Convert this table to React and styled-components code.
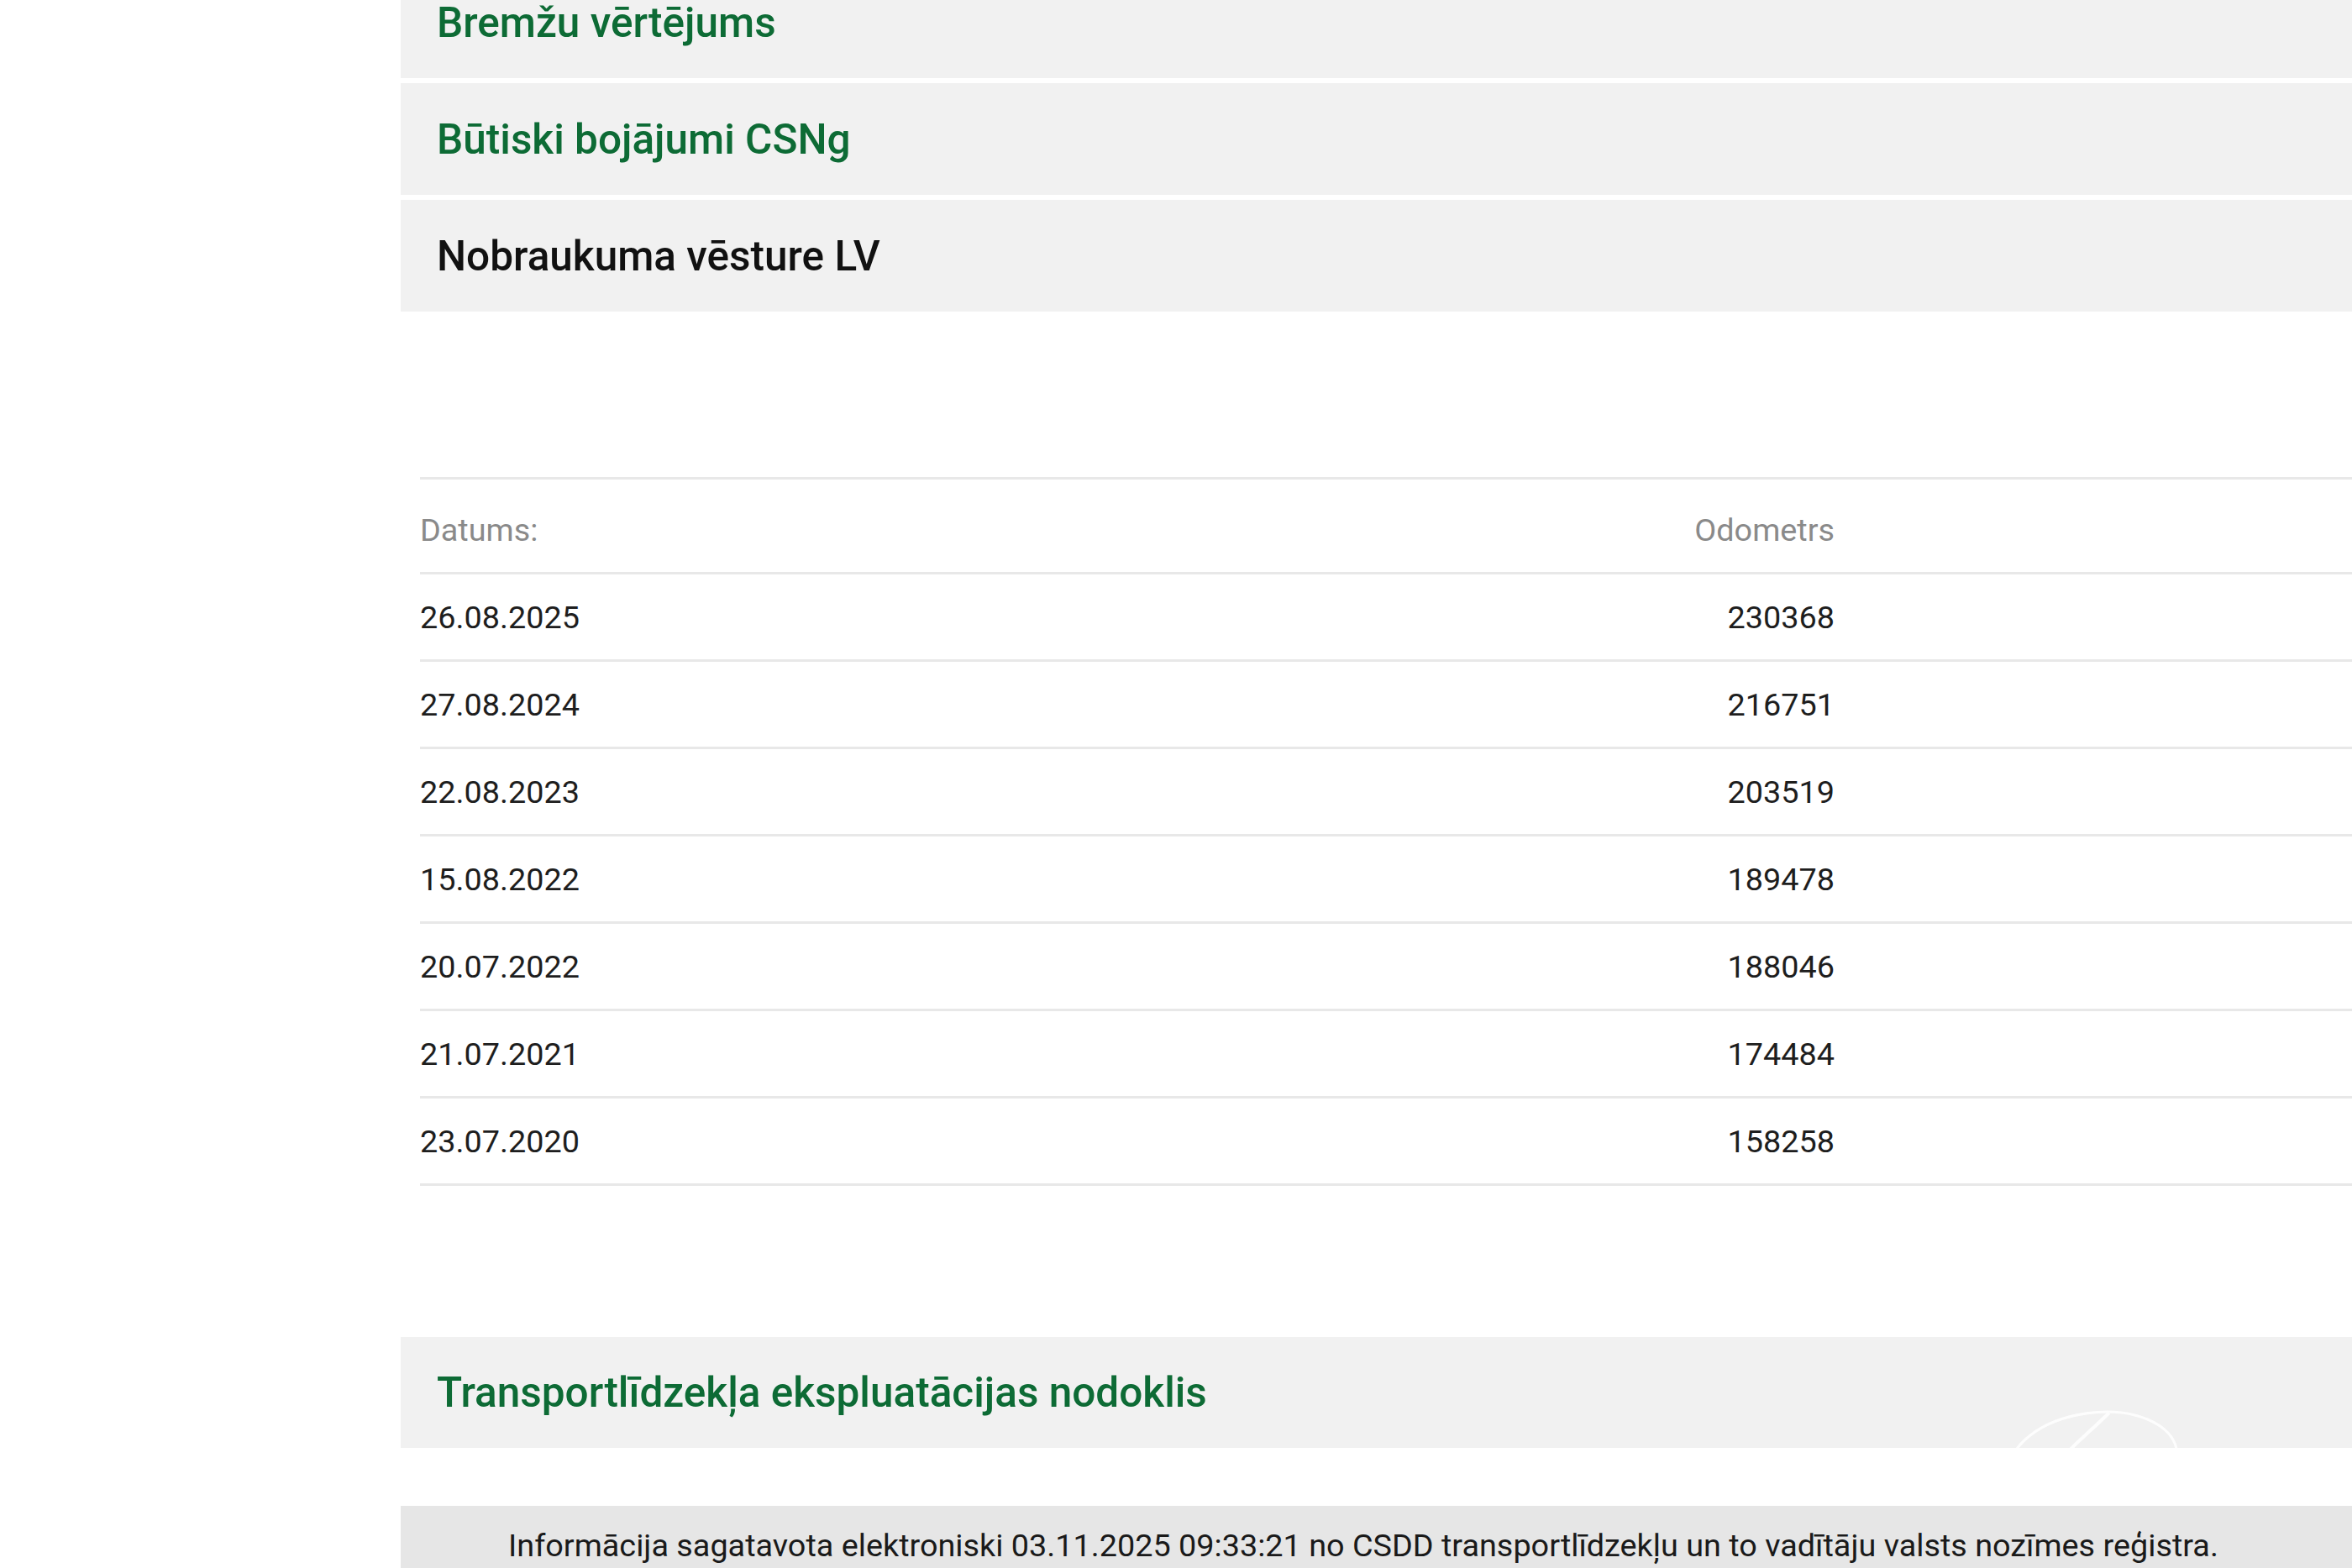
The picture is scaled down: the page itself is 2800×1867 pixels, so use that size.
import React from "react";
import styled, { createGlobalStyle } from "styled-components";

const mileage = [
  { date: "26.08.2025", km: "230368" },
  { date: "27.08.2024", km: "216751" },
  { date: "22.08.2023", km: "203519" },
  { date: "15.08.2022", km: "189478" },
  { date: "20.07.2022", km: "188046" },
  { date: "21.07.2021", km: "174484" },
  { date: "23.07.2020", km: "158258" },
];

const App = () => {
  return (
    <>
      <GlobalStyle />
      <Page>
        <Content>
          <SectionBar>
            <SectionTitle>Bremžu vērtējums</SectionTitle>
          </SectionBar>
          <SectionBar>
            <SectionTitle>Būtiski bojājumi CSNg</SectionTitle>
          </SectionBar>
          <SectionBar>
            <SectionTitle active>Nobraukuma vēsture LV</SectionTitle>
          </SectionBar>

          <MileageTable>
            <HeadRow>
              <HeadCell>Datums:</HeadCell>
              <HeadCell right>Odometrs</HeadCell>
              <span />
            </HeadRow>
            {mileage.map((row) => (
              <Row key={row.date}>
                <Cell>{row.date}</Cell>
                <Cell right>{row.km}</Cell>
                <span />
              </Row>
            ))}
          </MileageTable>

          <TaxBar>
            <SectionTitle>Transportlīdzekļa ekspluatācijas nodoklis</SectionTitle>
            {/* faint logo watermark behind the bar */}
            <Watermark viewBox="0 0 200 90">
              <ellipse
                cx="100"
                cy="62"
                rx="96"
                ry="56"
                fill="none"
                stroke="#ffffff"
                strokeWidth="3"
                transform="rotate(-8 100 62)"
              />
              <path
                d="M118 6 C 100 24, 80 40, 62 60"
                fill="none"
                stroke="#ffffff"
                strokeWidth="4"
              />
            </Watermark>
          </TaxBar>

          <Footer>
            Informācija sagatavota elektroniski 03.11.2025 09:33:21 no CSDD
            transportlīdzekļu un to vadītāju valsts nozīmes reģistra.
          </Footer>
        </Content>
      </Page>
    </>
  );
};

const GlobalStyle = createGlobalStyle`
  body {
    margin: 0;
    background: #ffffff;
    font-family: Roboto, "Liberation Sans", sans-serif;
    overflow: hidden;
  }
`;

const Page = styled.div`
  width: 2800px;
  height: 1867px;
  overflow: hidden;
`;

const Content = styled.div`
  margin-left: 477px;
  margin-top: -40px;
  display: flex;
  flex-direction: column;
`;

const SectionBar = styled.div`
  height: 133px;
  background: #f1f1f1;
  display: flex;
  align-items: center;
  padding-left: 43px;
  margin-bottom: 6px;
`;

const SectionTitle = styled.h3`
  margin: 0;
  font-size: 49.5px;
  font-weight: 500;
  color: ${(p) => (p.active ? "#111111" : "#0d6b35")};
  position: relative;
  z-index: 1;
`;

const MileageTable = styled.div`
  margin: 191px 0 0 23px;
  border-top: 3px solid #e8e8e8;
`;

const HeadRow = styled.div`
  display: grid;
  grid-template-columns: 1fr 300px 616px;
  align-items: center;
  height: 113px;
  padding-top: 10px;
  box-sizing: border-box;
  border-bottom: 3px solid #e8e8e8;
`;

const HeadCell = styled.div`
  font-size: 37.8px;
  color: #8a8a8a;
  text-align: ${(p) => (p.right ? "right" : "left")};
`;

const Row = styled.div`
  display: grid;
  grid-template-columns: 1fr 300px 616px;
  align-items: center;
  height: 104px;
  box-sizing: border-box;
  border-bottom: 3px solid #e8e8e8;
`;

const Cell = styled.div`
  font-size: 37.8px;
  color: #1e1e1e;
  text-align: ${(p) => (p.right ? "right" : "left")};
`;

const TaxBar = styled(SectionBar)`
  position: relative;
  overflow: hidden;
  margin-top: 180px;
  height: 132px;
`;

const Watermark = styled.svg`
  position: absolute;
  left: 1910px;
  top: 84px;
  width: 210px;
  height: 94px;
  opacity: 0.9;
`;

const Footer = styled.div`
  margin-top: 63px;
  background: #e6e6e6;
  height: 200px;
  padding: 25px 0 0 128px;
  box-sizing: border-box;
  font-size: 37.8px;
  color: #1a1a1a;
`;

export default App;
